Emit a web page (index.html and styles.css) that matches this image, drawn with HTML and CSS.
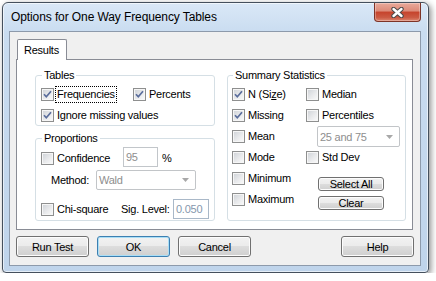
FILE: index.html
```html
<!DOCTYPE html>
<html lang="en">

<head>
    <meta charset="UTF-8">
    <title>Options for One Way Frequency Tables</title>
    <link rel="stylesheet" href="styles.css">
</head>

<body>
    <div class="window">
        <div class="titlebar">
            <span class="title">Options for One Way Frequency Tables</span>
            <button class="close" type="button" aria-label="Close">
                <svg width="15" height="11" viewBox="0 0 15 11">
                    <path d="M3.5 2 L11.5 9 M11.5 2 L3.5 9" stroke="#4a4a4a" stroke-width="4.4" stroke-linecap="round" />
                    <path d="M3.5 2 L11.5 9 M11.5 2 L3.5 9" stroke="#fff" stroke-width="2.4" stroke-linecap="round" />
                </svg>
            </button>
        </div>
        <div class="client">
            <div class="tabs"><span class="tab">Results</span></div>
            <div class="page">
                <div class="col">
                    <fieldset class="group tables">
                        <legend>Tables</legend>
                        <div class="tables-grid">
                            <label class="check">
                                <span class="box"><svg viewBox="0 0 11 11"><path d="M2 5.2 L4.3 7.8 L9 2.2" /></svg></span>
                                <span class="focus">Frequencies</span>
                            </label>
                            <label class="check">
                                <span class="box"><svg viewBox="0 0 11 11"><path d="M2 5.2 L4.3 7.8 L9 2.2" /></svg></span>
                                Percents
                            </label>
                            <label class="check span2">
                                <span class="box"><svg viewBox="0 0 11 11"><path d="M2 5.2 L4.3 7.8 L9 2.2" /></svg></span>
                                Ignore missing values
                            </label>
                        </div>
                    </fieldset>
                    <fieldset class="group proportions">
                        <legend>Proportions</legend>
                        <div class="row row-conf">
                            <label class="check conf"><span class="box"></span>Confidence</label>
                            <span class="field conf-field">95</span>
                            <span class="unit">%</span>
                        </div>
                        <div class="row row-method">
                            <span class="method-label">Method:</span>
                            <span class="combo method-combo">
                                Wald
                                <svg width="7" height="4" viewBox="0 0 7 4"><path d="M0 0 H7 L3.5 4 Z" /></svg>
                            </span>
                        </div>
                        <div class="row row-chi">
                            <label class="check chi"><span class="box"></span>Chi-square</label>
                            <span class="sig-label">Sig. Level:</span>
                            <span class="field sig-field">0.050</span>
                        </div>
                    </fieldset>
                </div>
                <fieldset class="group summary">
                    <legend>Summary Statistics</legend>
                    <div class="summary-grid">
                        <label class="check">
                            <span class="box"><svg viewBox="0 0 11 11"><path d="M2 5.2 L4.3 7.8 L9 2.2" /></svg></span>
                            N (Si<span class="key">z</span>e)
                        </label>
                        <label class="check"><span class="box"></span>Median</label>
                        <label class="check">
                            <span class="box"><svg viewBox="0 0 11 11"><path d="M2 5.2 L4.3 7.8 L9 2.2" /></svg></span>
                            Missing
                        </label>
                        <label class="check"><span class="box"></span>Percentiles</label>
                        <label class="check"><span class="box"></span>Mean</label>
                        <span class="combo pct-combo">
                            25 and 75
                            <svg width="7" height="4" viewBox="0 0 7 4"><path d="M0 0 H7 L3.5 4 Z" /></svg>
                        </span>
                        <label class="check"><span class="box"></span>Mode</label>
                        <label class="check"><span class="box"></span>Std Dev</label>
                        <label class="check"><span class="box"></span>Minimum</label>
                        <div class="side-buttons">
                            <button class="btn small" type="button">Select All</button>
                            <button class="btn small" type="button">Clear</button>
                        </div>
                        <label class="check"><span class="box"></span>Maximum</label>
                    </div>
                </fieldset>
            </div>
            <div class="buttons">
                <button class="btn" type="button">Run Test</button>
                <button class="btn default" type="button">OK</button>
                <button class="btn" type="button">Cancel</button>
                <button class="btn help" type="button">Help</button>
            </div>
        </div>
    </div>
</body>

</html>
```

FILE: styles.css
```css
body {
    margin: 0;
    background-color: #fff;
    color: #000;
    font-family: "Liberation Sans", Arial, sans-serif;
    font-size: 11px;
    letter-spacing: -0.25px;
}

/* window frame */

.window {
    box-sizing: border-box;
    width: 427px;
    height: 271px;
    margin: 2px 0 0 2px;
    padding: 0 7px 6px 6px;
    border: 1px solid #45505d;
    border-radius: 6px 6px 4px 4px;
    background: linear-gradient(to bottom, #dae8f7 0, #c9dcf0 30px, #bfd4eb 100%);
    box-shadow: inset 0 0 0 1px rgba(255, 255, 255, 0.6), 2px 2px 6px rgba(0, 0, 0, 0.45);
}

.titlebar {
    display: flex;
    align-items: center;
    height: 28px;
}

.title {
    padding-left: 2px;
    font-size: 12px;
    letter-spacing: -0.1px;
}

.close {
    display: flex;
    align-items: center;
    justify-content: center;
    align-self: flex-start;
    box-sizing: border-box;
    width: 47px;
    height: 19px;
    margin-left: auto;
    padding: 0;
    border: 1px solid #7d3327;
    border-top: 0;
    border-radius: 0 0 4px 4px;
    background: linear-gradient(to bottom, #e9aa9b 0, #dc8a78 45%, #c6432c 50%, #cb5a43 80%, #dc8670 100%);
    box-shadow: inset 0 0 0 1px rgba(255, 255, 255, 0.3);
}

.client {
    box-sizing: border-box;
    height: 235px;
    padding: 7px 6px 0 6px;
    border: 1px solid #8d9aab;
    background-color: #f0f0f0;
}

/* tab */

.tabs {
    display: flex;
    height: 20px;
}

.tab {
    position: relative;
    z-index: 1;
    height: 20px;
    margin-left: 1px;
    padding: 0 7px 0 6px;
    border: 1px solid #898c95;
    border-bottom: 0;
    border-radius: 2px 2px 0 0;
    background-color: #fff;
    line-height: 20px;
}

.page {
    box-sizing: border-box;
    display: flex;
    gap: 12px;
    width: 397px;
    height: 171px;
    padding: 9px 0 0 18px;
    border: 1px solid #898c95;
    background-color: #fff;
}

.col {
    display: flex;
    flex-direction: column;
    width: 180px;
}

/* group boxes */

.group {
    box-sizing: border-box;
    min-width: 0;
    margin: 0;
    padding: 3px 0 0 5px;
    border: 1px solid #d5dfe5;
    border-radius: 3px;
}

.group legend {
    margin-left: 1px;
    padding: 0 2px;
    line-height: 12px;
}

.tables {
    height: 57px;
}

.tables-grid {
    display: grid;
    grid-template-columns: 92px auto;
    grid-auto-rows: 21px;
}

.span2 {
    grid-column: span 2;
}

.proportions {
    height: 89px;
    margin-top: 6px;
}

.summary {
    width: 179px;
    height: 152px;
    padding-left: 4px;
}

.summary-grid {
    display: grid;
    grid-template-columns: 74px auto;
    grid-auto-rows: 21px;
}

/* checkboxes */

.check {
    display: flex;
    align-items: center;
    line-height: 13px;
    white-space: nowrap;
}

.box {
    box-sizing: border-box;
    flex: none;
    width: 13px;
    height: 13px;
    margin-right: 3px;
    border: 1px solid #8e8f8f;
    background: linear-gradient(135deg, #cdd1d6 0, #e9eaec 55%, #fbfbfb 100%);
    box-shadow: inset 0 0 0 1px #f6f6f6;
}

.box svg {
    display: block;
    width: 11px;
    height: 11px;
}

.box path {
    fill: none;
    stroke: #5a6d9c;
    stroke-width: 1.7;
}

.focus {
    display: inline-block;
    line-height: 13px;
    outline: 1px dotted #000;
    outline-offset: 1px;
}

.key {
    text-decoration: underline;
}

/* proportions rows */

.row {
    display: flex;
    height: 20px;
}

.row-conf {
    align-items: flex-start;
}

.row-conf .check,
.row-conf .unit {
    margin-top: 5px;
    line-height: 13px;
}

.conf {
    width: 82px;
}

.unit {
    margin-left: 4px;
}

.row-method {
    align-items: center;
    margin-top: 3px;
}

.method-label {
    width: 45px;
    padding-left: 10px;
}

.row-chi {
    align-items: center;
    margin-top: 9px;
}

.chi {
    width: 80px;
}

.sig-label {
    width: 52px;
}

.field {
    box-sizing: border-box;
    height: 20px;
    padding-left: 2px;
    border: 1px solid #c2c6ca;
    background-color: #fff;
    color: #8e8e8e;
    line-height: 18px;
}

.conf-field {
    width: 35px;
}

.sig-field {
    width: 36px;
    border-color: #a9b8c8;
    color: #8597ad;
}

/* combos */

.combo {
    box-sizing: border-box;
    display: flex;
    align-items: center;
    justify-content: space-between;
    padding: 0 6px 0 2px;
    border: 1px solid #c2c5c8;
    border-radius: 2px;
    background-color: #fff;
    color: #8e8e8e;
}

.combo path {
    fill: #a8a8a8;
}

.method-combo {
    width: 100px;
    height: 20px;
}

.pct-combo {
    width: 83px;
    height: 21px;
    margin-left: 11px;
}

/* buttons */

.btn {
    box-sizing: border-box;
    width: 73px;
    height: 21px;
    padding: 0;
    border: 1px solid #707070;
    border-radius: 3px;
    background: linear-gradient(to bottom, #f2f2f2 0, #ebebeb 50%, #dddddd 50%, #cfcfcf 100%);
    box-shadow: inset 0 0 0 1px #fcfcfc;
    color: #000;
    font: inherit;
    letter-spacing: inherit;
}

.btn.default {
    border-color: #3c7fb1;
    box-shadow: inset 0 0 0 1px #a9def6;
}

.side-buttons {
    grid-row: span 2;
    display: flex;
    flex-direction: column;
    gap: 5px;
    margin-left: 12px;
    padding-top: 9px;
}

.btn.small {
    width: 66px;
    height: 18px;
}

.buttons {
    display: flex;
    gap: 8px;
    margin-top: 6px;
}

.help {
    margin-left: auto;
}
```
